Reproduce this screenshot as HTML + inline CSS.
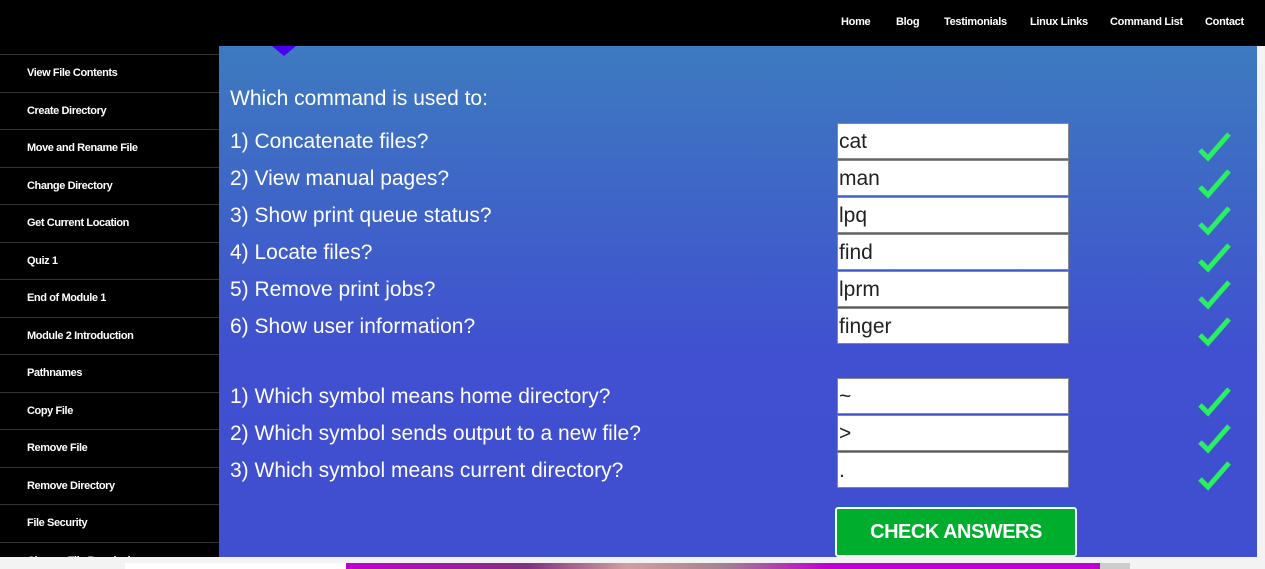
<!DOCTYPE html><html style="background:#f3f3f3"><head><style>
html,body{margin:0;width:1265px;height:569px;overflow:hidden}
body{background:#000;font-family:"Liberation Sans",sans-serif;position:relative}
.nav{position:absolute;top:0;left:0;width:1265px;height:46px;background:#000}
.nav a{position:absolute;top:16px;color:#fff;font-size:11px;text-decoration:none;font-weight:bold;letter-spacing:-0.3px}
.side{position:absolute;left:0;top:54px;width:219px}
.side div{height:36.5px;border-top:1px solid #333;color:#fff;font-size:11px;line-height:36px;padding-left:27px;font-weight:bold;letter-spacing:-0.4px}
.main{position:absolute;left:219px;top:46px;width:1038px;height:511px;background:linear-gradient(#3d7abf,#4050d0 60%,#404ed0)}
.q{position:absolute;left:11px;color:#fff;font-size:21px}
.in{position:absolute;left:618px;width:232px;height:36px;background:#fff;border:1px solid #888;font-size:21px;line-height:36px;color:#222;box-sizing:border-box;padding-left:1px}
.ck{position:absolute;left:978px}
.btn{position:absolute;left:616px;top:461px;width:242px;height:50px;box-sizing:border-box;border:2px solid #fff;outline:1px solid #1d5fc8;border-radius:3px;background:#00ad2c;color:#fff;font-weight:bold;font-size:20px;text-align:center;line-height:46px;letter-spacing:-0.5px}
.bot{position:absolute;left:0;top:557px;width:1265px;height:12px;background:#f3f3f3}
</style></head><body>
<div class="nav"><a style="left:841px">Home</a><a style="left:896px">Blog</a><a style="left:944px">Testimonials</a><a style="left:1030px">Linux Links</a><a style="left:1110px">Command List</a><a style="left:1205px">Contact</a></div>
<div class="side"><div>View File Contents</div><div>Create Directory</div><div>Move and Rename File</div><div>Change Directory</div><div>Get Current Location</div><div>Quiz 1</div><div>End of Module 1</div><div>Module 2 Introduction</div><div>Pathnames</div><div>Copy File</div><div>Remove File</div><div>Remove Directory</div><div>File Security</div><div>Change File Permissions</div></div>
<div style="position:absolute;left:1257px;top:46px;width:8px;height:511px;background:#f3f3f3"></div>
<div class="main">
<div style="position:absolute;left:53px;top:0;width:0;height:0;border-left:12px solid transparent;border-right:12px solid transparent;border-top:10px solid #4a00f0"></div>
<div class="q" style="top:41px">Which command is used to:</div>
<div class="q" style="top:84px">1) Concatenate files?</div>
<div class="q" style="top:121px">2) View manual pages?</div>
<div class="q" style="top:158px">3) Show print queue status?</div>
<div class="q" style="top:195px">4) Locate files?</div>
<div class="q" style="top:232px">5) Remove print jobs?</div>
<div class="q" style="top:269px">6) Show user information?</div>
<div class="q" style="top:339px">1) Which symbol means home directory?</div>
<div class="q" style="top:376px">2) Which symbol sends output to a new file?</div>
<div class="q" style="top:413px">3) Which symbol means current directory?</div>
<div class="in" style="top:77px">cat</div><div class="in" style="top:114px">man</div><div class="in" style="top:151px">lpq</div><div class="in" style="top:188px">find</div><div class="in" style="top:225px">lprm</div><div class="in" style="top:262px">finger</div>
<div class="in" style="top:332px">~</div><div class="in" style="top:369px">&gt;</div><div class="in" style="top:406px">.</div>
<svg class="ck" style="top:84px" width="36" height="32" viewBox="0 0 36 32"><path d="M3 20 L11 28 L32 4" fill="none" stroke="#28f060" stroke-width="5"/></svg>
<svg class="ck" style="top:121px" width="36" height="32" viewBox="0 0 36 32"><path d="M3 20 L11 28 L32 4" fill="none" stroke="#28f060" stroke-width="5"/></svg>
<svg class="ck" style="top:158px" width="36" height="32" viewBox="0 0 36 32"><path d="M3 20 L11 28 L32 4" fill="none" stroke="#28f060" stroke-width="5"/></svg>
<svg class="ck" style="top:195px" width="36" height="32" viewBox="0 0 36 32"><path d="M3 20 L11 28 L32 4" fill="none" stroke="#28f060" stroke-width="5"/></svg>
<svg class="ck" style="top:232px" width="36" height="32" viewBox="0 0 36 32"><path d="M3 20 L11 28 L32 4" fill="none" stroke="#28f060" stroke-width="5"/></svg>
<svg class="ck" style="top:269px" width="36" height="32" viewBox="0 0 36 32"><path d="M3 20 L11 28 L32 4" fill="none" stroke="#28f060" stroke-width="5"/></svg>
<svg class="ck" style="top:339px" width="36" height="32" viewBox="0 0 36 32"><path d="M3 20 L11 28 L32 4" fill="none" stroke="#28f060" stroke-width="5"/></svg>
<svg class="ck" style="top:376px" width="36" height="32" viewBox="0 0 36 32"><path d="M3 20 L11 28 L32 4" fill="none" stroke="#28f060" stroke-width="5"/></svg>
<svg class="ck" style="top:413px" width="36" height="32" viewBox="0 0 36 32"><path d="M3 20 L11 28 L32 4" fill="none" stroke="#28f060" stroke-width="5"/></svg>
<div class="btn">CHECK ANSWERS</div>
</div>
<div class="bot"><div style="position:absolute;left:125px;top:6px;width:1005px;height:6px;background:linear-gradient(90deg,#fff 0,#fff 22%,#c000d0 22%,#803080 40%,#d0a0a0 50%,#a08090 60%,#c000d0 70%,#c000d0 97%,#ccc 97%)"></div></div>
</body></html>
